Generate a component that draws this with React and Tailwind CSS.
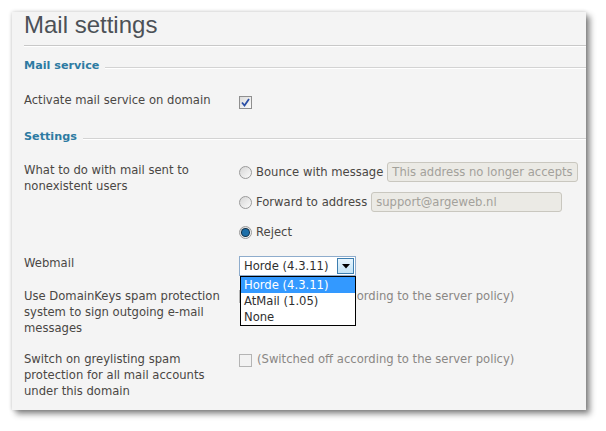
import React from 'react';

const font = { fontFamily: '"DejaVu Sans", Verdana, sans-serif' };

const Check = ({ checked, disabled }) => (
    <span
        className={`inline-flex w-[13px] h-[13px] shrink-0 items-center justify-center border ${
            disabled ? 'border-[#b4b4b4] bg-[#f2f2f2]' : 'border-[#8f8f8f] bg-gradient-to-br from-[#dcdcdc] to-[#fbfbfb]'
        }`}
    >
        {checked && (
            <svg width="9" height="9" viewBox="0 0 9 9">
                <path d="M1 4.5 L3.5 7.5 L8 1" fill="none" stroke="#2b4fa6" strokeWidth="1.8" />
            </svg>
        )}
    </span>
);

const Radio = ({ checked }) => (
    <span className="inline-flex w-[13px] h-[13px] shrink-0 items-center justify-center rounded-full border border-[#9a9a9a] bg-gradient-to-br from-[#d6d6d6] to-[#fbfbfb]">
        {checked && <span className="w-[7px] h-[7px] rounded-full bg-[#1e6fa8] ring-1 ring-[#0e2f48]" />}
    </span>
);

const SectionTitle = ({ children, className }) => (
    <div className={`flex items-center h-[16px] ${className}`}>
        <span className="font-bold text-[#2d7ba2] text-[11.2px]">{children}</span>
        <span className="flex-1 ml-[6px] mt-[2px] border-t border-[#d3d3d3] shadow-[0_1px_0_#fff]" />
    </div>
);

const TextBox = ({ value, className }) => (
    <div
        className={`h-[20px] w-[191px] rounded-[3px] border border-[#c9c7bf] bg-[#ebeae5] pl-[4px] leading-[18px] text-[#a3a19b] overflow-hidden whitespace-nowrap ${className}`}
    >
        {value}
    </div>
);

export default function App() {
    return (
        <div className="min-h-screen bg-white pt-[12px] pl-[12px]" style={font}>
            <div className="relative w-[574px] h-[398px] bg-[#f4f4f4] pl-[12px] text-[11.6px] leading-[16px] text-[#4a4744] shadow-[0_0_4px_rgba(0,0,0,0.2),4px_4px_6px_rgba(0,0,0,0.45)]">
                <div
                    className="h-[34px] pt-[1px] border-b border-[#c8c8c8] shadow-[0_1px_0_#fff] text-[24px] leading-[24px] text-[#4c5157]"
                    style={{ fontFamily: '"Liberation Sans", Arial, sans-serif' }}
                >
                    Mail settings
                </div>

                <SectionTitle className="mt-[12px]">Mail service</SectionTitle>

                <div className="flex mt-[18px]">
                    <div className="w-[215px]">Activate mail service on domain</div>
                    <div className="mt-[3px]">
                        <Check checked />
                    </div>
                </div>

                <SectionTitle className="mt-[18px]">Settings</SectionTitle>

                <div className="flex mt-[17px]">
                    <div className="w-[215px] pr-[20px]">What to do with mail sent to nonexistent users</div>
                    <div className="flex flex-col">
                        <div className="flex items-center h-[20px]">
                            <Radio />
                            <span className="ml-[4px]">Bounce with message</span>
                            <TextBox className="ml-[4px]" value="This address no longer accepts" />
                        </div>
                        <div className="flex items-center h-[20px] mt-[10px]">
                            <Radio />
                            <span className="ml-[4px]">Forward to address</span>
                            <TextBox className="ml-[4px]" value="support@argeweb.nl" />
                        </div>
                        <div className="flex items-center h-[16px] mt-[12px]">
                            <Radio checked />
                            <span className="ml-[4px]">Reject</span>
                        </div>
                    </div>
                </div>

                <div className="flex mt-[15px]">
                    <div className="w-[215px]">Webmail</div>
                    <div className="relative mt-[1px] z-10">
                        <div className="flex items-center w-[117px] h-[20px] border border-[#8eaccc] bg-white">
                            <span className="flex-1 pl-[4px] text-[#2f2f2f]">Horde (4.3.11)</span>
                            <span className="mr-[1px] flex items-center justify-center w-[17px] h-[16px] border border-[#3d7eb0] bg-gradient-to-b from-[#e8f5fd] to-[#c2e3f6]">
                                <svg width="8" height="5" viewBox="0 0 8 5">
                                    <path d="M0 0 H8 L4 4.5 Z" fill="#000" />
                                </svg>
                            </span>
                        </div>
                        <div className="absolute left-[1px] top-[20px] w-[116px] border border-black bg-white text-[#2f2f2f]">
                            <div className="h-[16px] bg-[#3399ff] pl-[3px] text-white">Horde (4.3.11)</div>
                            <div className="h-[16px] pl-[3px]">AtMail (1.05)</div>
                            <div className="h-[16px] pl-[3px]">None</div>
                        </div>
                    </div>
                </div>

                <div className="flex mt-[12px]">
                    <div className="w-[215px] -mr-[6px]">Use DomainKeys spam protection system to sign outgoing e-mail messages</div>
                    <div className="flex items-start ml-[6px]">
                        <span className="mt-[2px]">
                            <Check disabled />
                        </span>
                        <span className="ml-[5px] text-[#8a8784]">(Switched off according to the server policy)</span>
                    </div>
                </div>

                <div className="flex mt-[15px]">
                    <div className="w-[215px] pr-[20px]">Switch on greylisting spam protection for all mail accounts under this domain</div>
                    <div className="flex items-start">
                        <span className="mt-[3px]">
                            <Check disabled />
                        </span>
                        <span className="ml-[5px] text-[#8a8784]">(Switched off according to the server policy)</span>
                    </div>
                </div>
            </div>
        </div>
    );
}
